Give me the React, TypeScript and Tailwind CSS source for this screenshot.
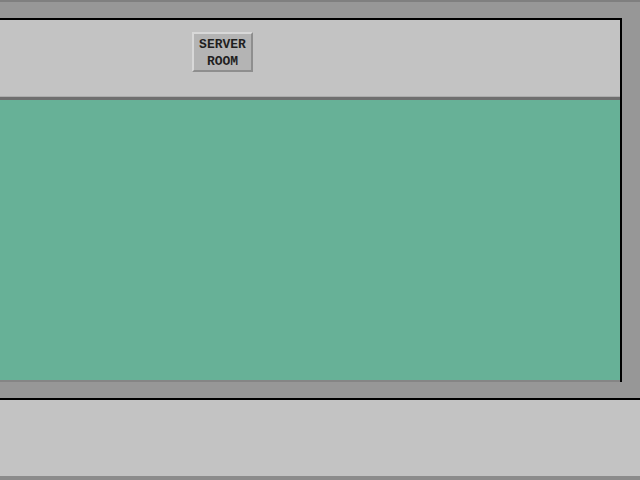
export default function App() {
  return (
    <div className="w-[640px] h-[480px] bg-[#979797] flex flex-col overflow-hidden">
      {/* top strip */}
      <div className="h-[18px] shrink-0 border-t-2 border-[#7f7f7f]" />

      {/* main framed panel */}
      <div className="h-[364px] shrink-0 flex">
        <div className="w-[622px] shrink-0 border-t-2 border-r-2 border-black flex flex-col">
          <div className="h-[76px] shrink-0 bg-[#c3c3c3] pl-[192px] pt-[12px]">
            <RoomButton />
          </div>
          <div className="h-px shrink-0 bg-[#adadad]" />
          <div className="h-[3px] shrink-0 bg-[#6f6f6f]" />
          <div className="h-[280px] shrink-0 bg-[#67b197]" />
          <div className="h-[2px] shrink-0 bg-[#858585]" />
        </div>
      </div>

      <div className="h-[16px] shrink-0" />
      <div className="h-[2px] shrink-0 bg-black" />
      <div className="h-[76px] shrink-0 bg-[#c3c3c3]" />
      <div className="h-[4px] shrink-0 bg-[#8b8b8b]" />
    </div>
  )
}

function RoomButton() {
  return (
    <button
      type="button"
      className="w-[61px] h-[40px] flex flex-col items-center justify-center pt-px bg-[#b4b4b4] border-2 border-t-[#d8d8d8] border-l-[#d8d8d8] border-b-[#8e8e8e] border-r-[#8e8e8e] text-[#1f1f1f] font-bold text-[13px] leading-[17px]"
      style={{ fontFamily: '"Liberation Mono", "DejaVu Sans Mono", monospace' }}
    >
      <span>SERVER</span>
      <span>ROOM</span>
    </button>
  )
}
